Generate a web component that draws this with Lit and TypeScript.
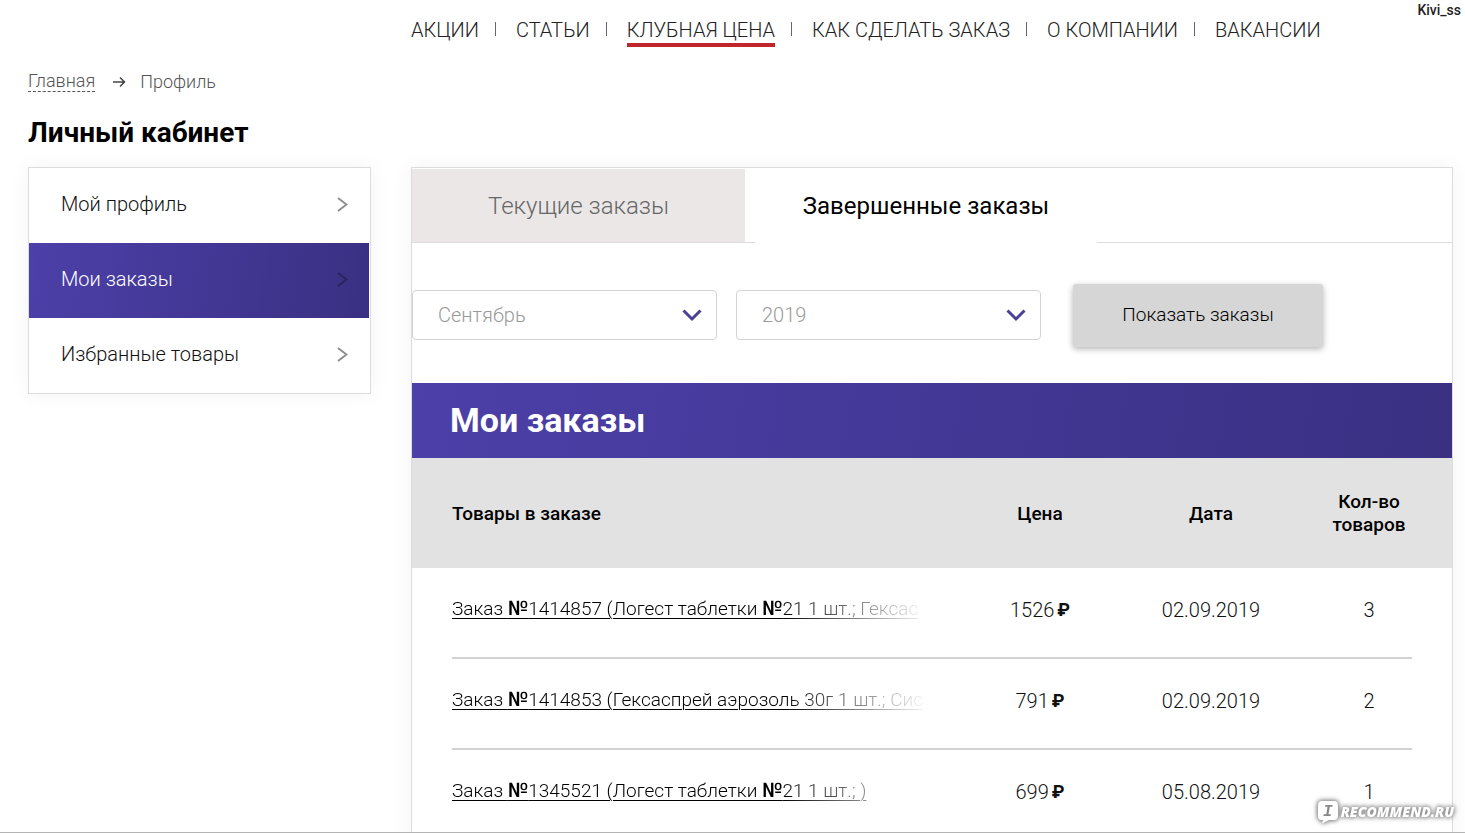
import { LitElement, html, css } from "lit";
import { customElement, state } from "lit/decorators.js";
import { classMap } from "lit/directives/class-map.js";

interface Order {
  name: string;
  price: string;
  date: string;
  count: number;
}

const ORDERS: Order[] = [
  { name: "Заказ №1414857 (Логест таблетки №21 1 шт.; Гексас", price: "1526", date: "02.09.2019", count: 3 },
  { name: "Заказ №1414853 (Гексаспрей аэрозоль 30г 1 шт.; Сис", price: "791", date: "02.09.2019", count: 2 },
  { name: "Заказ №1345521 (Логест таблетки №21 1 шт.; )", price: "699", date: "05.08.2019", count: 1 },
];

@customElement("site-nav")
class SiteNav extends LitElement {
  static styles = css`
    :host {
      display: block;
    }
    .list {
      display: flex;
      margin: 0;
      padding: 0;
      list-style: none;
      font-size: 20px;
      line-height: 24px;
      white-space: nowrap;
    }
    .item {
      display: flex;
    }
    .item + .item::before {
      content: "";
      width: 1px;
      height: 14px;
      margin: 4px 20px 0 16px;
      background: #6b6478;
    }
    .link {
      color: #222;
      text-decoration: none;
    }
    .marked {
      padding-bottom: 1px;
      border-bottom: 4px solid #c0272d;
    }
  `;
  private items = ["АКЦИИ", "СТАТЬИ", "КЛУБНАЯ ЦЕНА", "КАК СДЕЛАТЬ ЗАКАЗ", "О КОМПАНИИ", "ВАКАНСИИ"];
  render() {
    return html`<nav>
      <ul class="list">
        ${this.items.map(
          (t, i) => html`<li class="item"><a href="#" class=${classMap({ link: true, marked: i === 2 })}>${t}</a></li>`
        )}
      </ul>
    </nav>`;
  }
}

@customElement("side-menu")
class SideMenu extends LitElement {
  static styles = css`
    :host {
      display: block;
    }
    .menu {
      border: 1px solid #dcdcde;
      background: #fff;
      box-shadow: 0 0 20px rgba(0, 0, 0, 0.05);
    }
    .link {
      display: flex;
      align-items: center;
      justify-content: space-between;
      height: 75px;
      padding: 0 22px 3px 32px;
      box-sizing: border-box;
      color: #111;
      font-size: 20px;
      line-height: 24px;
      text-decoration: none;
    }
    .current {
      margin-right: 1px;
      padding-right: 21px;
      background: linear-gradient(100deg, #4c40a9, #3a3082);
      color: #fff;
    }
    .arrow {
      width: 12px;
      height: 16px;
      fill: none;
      stroke: #8e8e8e;
      stroke-width: 2;
    }
    .current .arrow {
      stroke: #2a2457;
    }
  `;
  private items = ["Мой профиль", "Мои заказы", "Избранные товары"];
  render() {
    return html`<nav class="menu">
      ${this.items.map(
        (t, i) => html`<a href="#" class=${classMap({ link: true, current: i === 1 })}>
          <span>${t}</span>
          <svg class="arrow" viewBox="0 0 12 16" aria-hidden="true"><path d="M2 2 10.500 8.500 2 15" /></svg>
        </a>`
      )}
    </nav>`;
  }
}

@customElement("orders-panel")
class OrdersPanel extends LitElement {
  static styles = css`
    :host {
      display: block;
      border: 1px solid #dcdcde;
      background: #fff;
      box-shadow: 0 0 20px rgba(0, 0, 0, 0.05);
    }
    .tabs {
      display: flex;
      gap: 10px;
      height: 75px;
      box-sizing: border-box;
      padding-top: 1px;
      border-bottom: 1px solid #dcdcde;
    }
    .tab {
      flex: 0 1 333px;
      border: 0;
      padding: 0;
      background: #ebe7e7;
      color: #666;
      font: 300 24px/28px Roboto, sans-serif;
      cursor: pointer;
    }
    .selected {
      flex-basis: 342px;
      margin-bottom: -1px;
      background: #fff;
      color: #000;
      font-weight: 400;
    }
    .filters {
      display: flex;
      align-items: center;
      padding: 41px 0 36px;
    }
    .field {
      display: grid;
      align-items: center;
      flex: 0 1 305px;
      margin-right: 19px;
      padding-bottom: 2px;
    }
    .select,
    .chevron {
      grid-area: 1 / 1;
    }
    .select {
      appearance: none;
      width: 100%;
      height: 50px;
      padding: 0 60px 0 25px;
      border: 1px solid #d4d4d8;
      border-radius: 4px;
      background: #fff;
      color: #999;
      font: 300 20px/24px Roboto, sans-serif;
    }
    .chevron {
      justify-self: end;
      width: 20px;
      height: 14px;
      margin-right: 15px;
      fill: none;
      stroke: #4b3f97;
      stroke-width: 3;
      pointer-events: none;
    }
    .show {
      flex: 0 1 250px;
      height: 63px;
      margin-left: 13px;
      padding: 0 0 2px;
      border: 0;
      border-radius: 3px;
      background: #d6d6d6;
      box-shadow: 0 2px 6px rgba(0, 0, 0, 0.3);
      color: #000;
      font: 300 19px/24px Roboto, sans-serif;
    }
    .title {
      margin: 0;
      padding: 0 38px;
      background: linear-gradient(100deg, #4c40a9, #3a3082);
      color: #fff;
      font-size: 34px;
      line-height: 75px;
      font-weight: 700;
    }
    .table,
    .head,
    .body {
      display: block;
    }
    .head {
      padding: 0 40px;
      background: #e2e2e2;
    }
    .body {
      padding: 0 40px;
    }
    .row {
      display: grid;
      grid-template-columns: 1fr 112px 230px 86px;
      align-items: center;
    }
    .head .row {
      height: 110px;
    }
    .body .row {
      height: 91px;
      box-sizing: border-box;
      padding-bottom: 6px;
      border-bottom: 2px solid #d2d2d2;
    }
    .th {
      padding: 0;
      font-size: 19px;
      line-height: 23px;
      font-weight: 500;
      text-align: center;
    }
    .th:first-child {
      text-align: left;
    }
    .cell {
      padding: 0;
      color: #111;
      font-size: 20px;
      line-height: 24px;
      text-align: center;
      white-space: nowrap;
    }
    .name {
      max-width: 488px;
      padding-bottom: 2px;
      text-align: left;
      font-size: 19px;
      mask-image: linear-gradient(to right, #000 330px, transparent 478px);
    }
    .order {
      color: #000;
      text-underline-offset: 3px;
      text-decoration-thickness: 1px;
    }
    .sign {
      font-size: 20px;
      font-weight: 500;
    }
    .price {
      display: inline-flex;
      align-items: center;
      gap: 3px;
    }
    .ruble {
      font-size: 18px;
      font-weight: 700;
    }
  `;
  @state() private tab = 1;
  private numbered(text: string) {
    return text.split("№").map((part, i) => (i ? html`<span class="sign">№</span>${part}` : part));
  }
  private chevron() {
    return html`<svg class="chevron" viewBox="0 0 20 14" aria-hidden="true"><path d="M1.500 2.500 10 11l8.500-8.500" /></svg>`;
  }
  render() {
    return html`
      <div class="tabs" role="tablist">
        ${["Текущие заказы", "Завершенные заказы"].map(
          (t, i) => html`<button
            role="tab"
            aria-selected=${this.tab === i ? "true" : "false"}
            class=${classMap({ tab: true, selected: this.tab === i })}
            @click=${() => (this.tab = i)}
          >${t}</button>`
        )}
      </div>
      <form class="filters" @submit=${(e: Event) => e.preventDefault()}>
        <div class="field">
          <select class="select" aria-label="Месяц"><option>Сентябрь</option></select>
          ${this.chevron()}
        </div>
        <div class="field">
          <select class="select" aria-label="Год"><option>2019</option></select>
          ${this.chevron()}
        </div>
        <button class="show">Показать заказы</button>
      </form>
      <h2 class="title">Мои заказы</h2>
      <table class="table">
        <thead class="head">
          <tr class="row">
            <th class="th" scope="col">Товары в заказе</th>
            <th class="th" scope="col">Цена</th>
            <th class="th" scope="col">Дата</th>
            <th class="th" scope="col">Кол-во товаров</th>
          </tr>
        </thead>
        <tbody class="body">
          ${ORDERS.map(
            (o) => html`<tr class="row">
              <td class="cell name"><a class="order" href="#">${this.numbered(o.name)}</a></td>
              <td class="cell"><span class="price">${o.price}<span class="ruble">₽</span></span></td>
              <td class="cell">${o.date}</td>
              <td class="cell">${o.count}</td>
            </tr>`
          )}
        </tbody>
      </table>
    `;
  }
}

@customElement("app-root")
class AppRoot extends LitElement {
  static styles = css`
    :host {
      display: block;
      position: relative;
      height: 100vh;
      overflow: hidden;
      box-sizing: border-box;
      border-bottom: 1px solid #b4b4b4;
      background: #fff;
      color: #000;
      font-family: Roboto, sans-serif;
      font-weight: 300;
    }
    .page {
      display: grid;
      grid-template-columns: 343px minmax(0, 1fr);
      column-gap: 40px;
      align-items: start;
      padding: 18px 12px 0 28px;
    }
    .nav {
      grid-column: 2;
    }
    .intro {
      grid-column: 1 / -1;
    }
    .crumbs {
      display: flex;
      align-items: center;
      margin-top: 23px;
      color: #555;
      font-size: 18px;
      line-height: 21px;
    }
    .home {
      margin-top: 1px;
      border-bottom: 1px dashed #555;
      color: inherit;
      line-height: 20px;
      text-decoration: none;
    }
    .to {
      width: 14px;
      height: 12px;
      margin: 2px 14px 0 17px;
      fill: none;
      stroke: #444;
      stroke-width: 1.5;
    }
    .heading {
      margin: 24px 0 17px;
      font-size: 28px;
      line-height: 34px;
      font-weight: 700;
    }
    .user {
      position: absolute;
      top: 2px;
      right: 4px;
      color: #222;
      font-size: 14px;
      line-height: 16px;
      font-weight: 500;
    }
    .mark {
      position: absolute;
      right: 11px;
      bottom: 7px;
      display: flex;
      align-items: center;
      gap: 2px;
      filter: drop-shadow(0 0 2px #888) drop-shadow(0 0 2px #999);
      color: #fff;
      font: italic 800 14px/26px "Open Sans", sans-serif;
    }
    .bubble {
      width: 22px;
      height: 24px;
    }
    .letter {
      fill: #888;
      font: italic 700 16px "Liberation Mono", monospace;
    }
  `;
  render() {
    return html`
      <div class="page">
        <site-nav class="nav"></site-nav>
        <header class="intro">
          <div class="crumbs">
            <a class="home" href="#">Главная</a>
            <svg class="to" viewBox="0 0 14 12" aria-hidden="true"><path d="M1 6h11M8 1.500 12.500 6 8 10.500" /></svg>
            <span>Профиль</span>
          </div>
          <h1 class="heading">Личный кабинет</h1>
        </header>
        <side-menu></side-menu>
        <orders-panel></orders-panel>
      </div>
      <div class="user">Kivi_ss</div>
      <div class="mark">
        <svg class="bubble" viewBox="0 0 22 24" aria-hidden="true">
          <path fill="#fff" d="M5 1h12q4 0 4 4v11q0 4-4 4h-5l-7 3.500 1-3.500H5q-4 0-4-4V5q0-4 4-4z" />
          <text class="letter" x="6" y="16">I</text>
        </svg>
        <span>RECOMMEND.RU</span>
      </div>
    `;
  }
}
